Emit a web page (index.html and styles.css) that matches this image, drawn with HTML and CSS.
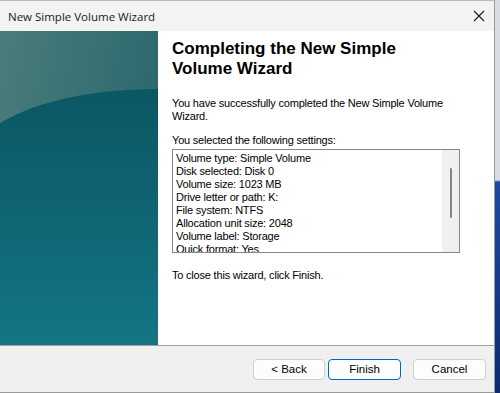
FILE: index.html
```html
<!DOCTYPE html>
<html lang="en">
<head>
  <meta charset="UTF-8">
  <meta name="viewport" content="width=device-width, initial-scale=1.0">
  <title>New Simple Volume Wizard</title>
  <link rel="stylesheet" href="styles.css">
</head>
<body>
  <div class="window">
    <div class="titlebar">
      <span class="title">New Simple Volume Wizard</span>
      <button class="close" aria-label="Close">
        <svg width="12" height="12" viewBox="0 0 12 12">
          <path d="M1 1 L11 11 M11 1 L1 11" stroke="#1a1a1a" stroke-width="1.1" fill="none"/>
        </svg>
      </button>
    </div>

    <div class="main">
      <div class="banner">
        <svg width="158" height="314" viewBox="0 0 158 314" preserveAspectRatio="none">
          <defs>
            <linearGradient id="sky" x1="0" y1="0" x2="1" y2="0.4">
              <stop offset="0" stop-color="#4a7c7b"/>
              <stop offset="1" stop-color="#2b676e"/>
            </linearGradient>
            <linearGradient id="sea" x1="0" y1="0" x2="0" y2="1">
              <stop offset="0" stop-color="#0b5764"/>
              <stop offset="0.5" stop-color="#0f6573"/>
              <stop offset="1" stop-color="#147585"/>
            </linearGradient>
          </defs>
          <rect width="158" height="314" fill="url(#sky)"/>
          <path d="M0 92 C40 68 100 58 158 58 L158 314 L0 314 Z" fill="url(#sea)"/>
        </svg>
      </div>

      <div class="content">
        <h1>Completing the New Simple Volume Wizard</h1>
        <p class="intro">You have successfully completed the New Simple Volume Wizard.</p>
        <p class="label">You selected the following settings:</p>
        <div class="listbox">
          <div class="lines">
            <div>Volume type: Simple Volume</div>
            <div>Disk selected: Disk 0</div>
            <div>Volume size: 1023 MB</div>
            <div>Drive letter or path: K:</div>
            <div>File system: NTFS</div>
            <div>Allocation unit size: 2048</div>
            <div>Volume label: Storage</div>
            <div>Quick format: Yes</div>
          </div>
          <div class="scrollbar"><div class="thumb"></div></div>
        </div>
        <p class="outro">To close this wizard, click Finish.</p>
      </div>
    </div>

    <div class="footer">
      <button class="btn">&lt; Back</button>
      <button class="btn primary">Finish</button>
      <button class="btn cancel">Cancel</button>
    </div>
  </div>
  <div class="desktop"></div>
</body>
</html>
```

FILE: styles.css
```css
* {
  box-sizing: border-box;
  margin: 0;
  padding: 0;
}
body {
  width: 500px;
  height: 393px;
  display: flex;
  overflow: hidden;
  font-family: 'Liberation Sans', Arial, sans-serif;
  background: #1b3f8f;
}
.window {
  width: 495px;
  height: 393px;
  display: flex;
  flex-direction: column;
  border-top: 1px solid #b9b9b9;
  border-right: 1px solid #9a9a9a;
  border-bottom: 1px solid #9a9a9a;
  background: #f0f0f0;
}
.desktop {
  flex: 1;
  background: linear-gradient(180deg, #d8dce4 0, #d8dce4 180px, #1f4aa0 182px, #0d2a6e 100%);
}
.titlebar {
  height: 30px;
  display: flex;
  align-items: center;
  justify-content: space-between;
  padding-left: 8px;
  background: #f3f3f3;
}
.title {
  font-family: 'Open Sans', 'Noto Sans', sans-serif;
  font-size: 11.5px;
  color: #1a1a1a;
}
.close {
  width: 30px;
  height: 30px;
  border: none;
  background: transparent;
  display: flex;
  align-items: center;
  justify-content: center;
}
.main {
  height: 315px;
  display: flex;
  background: #fff;
  border-bottom: 1px solid #a0a0a0;
}
.banner {
  width: 162px;
  height: 314px;
  display: flex;
  background: linear-gradient(90deg, #d4d4d4, #f4f4f4 60%, #fff);
  padding-right: 4px;
}
.banner svg {
  display: block;
}
.content {
  flex: 1;
  padding: 8px 0 0 10px;
  color: #000;
  font-size: 11px;
  letter-spacing: -0.2px;
}
h1 {
  width: 262px;
  font-size: 17px;
  line-height: 20px;
  font-weight: bold;
  letter-spacing: 0;
  margin-bottom: 18px;
}
.intro {
  width: 290px;
  line-height: 13px;
  margin-bottom: 11px;
}
.label {
  line-height: 13px;
  margin-bottom: 2px;
}
.listbox {
  width: 288px;
  height: 104px;
  border: 1px solid #828790;
  display: flex;
  overflow: hidden;
  margin-bottom: 16px;
}
.lines {
  flex: 1;
  padding: 2px 0 0 3px;
  line-height: 13px;
  white-space: nowrap;
}
.scrollbar {
  width: 17px;
  background: #f0f0f0;
  display: flex;
  justify-content: center;
  padding-top: 18px;
}
.thumb {
  width: 2px;
  height: 50px;
  background: #858585;
  border-radius: 1px;
}
.outro {
  line-height: 13px;
}
.footer {
  flex: 1;
  display: flex;
  align-items: center;
  padding: 0 8px 0 253px;
}
.btn {
  width: 72px;
  height: 21px;
  font-family: 'Liberation Sans', Arial, sans-serif;
  font-size: 11.5px;
  color: #000;
  background: #fdfdfd;
  border: 1px solid #d0d0d0;
  border-radius: 4px;
  margin-right: 3px;
}
.primary {
  width: 73px;
  border: 1px solid #0067c0;
  margin-right: 12px;
}
.cancel {
  width: 73px;
  margin-right: 0;
}
```
